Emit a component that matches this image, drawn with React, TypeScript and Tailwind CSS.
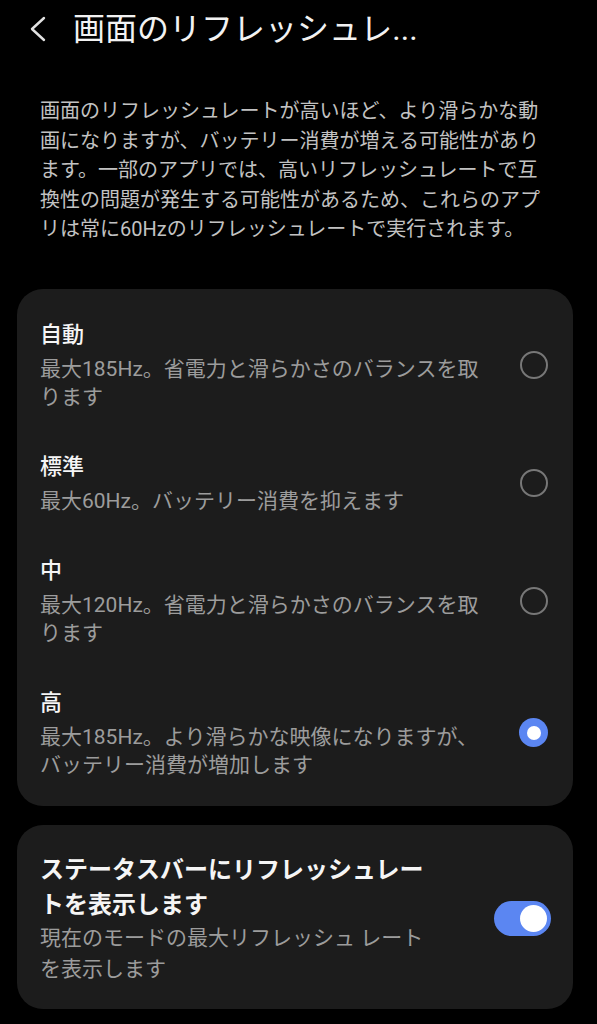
const options = [
  {
    name: '自動',
    lines: ['最大185Hz。省電力と滑らかさのバランスを取', 'ります'],
    selected: false,
  },
  {
    name: '標準',
    lines: ['最大60Hz。バッテリー消費を抑えます'],
    selected: false,
  },
  {
    name: '中',
    lines: ['最大120Hz。省電力と滑らかさのバランスを取', 'ります'],
    selected: false,
  },
  {
    name: '高',
    lines: ['最大185Hz。より滑らかな映像になりますが、', 'バッテリー消費が増加します'],
    selected: true,
  },
];

const description = [
  '画面のリフレッシュレートが高いほど、より滑らかな動',
  '画になりますが、バッテリー消費が増える可能性があり',
  'ます。一部のアプリでは、高いリフレッシュレートで互',
  '換性の問題が発生する可能性があるため、これらのアプ',
  'リは常に60Hzのリフレッシュレートで実行されます。',
];

function Radio({ checked }: { checked: boolean }) {
  if (checked) {
    return (
      <div className="flex h-[29px] w-[29px] flex-none items-center justify-center rounded-full bg-[#5b86f2]">
        <div className="h-[14px] w-[14px] rounded-full bg-white" />
      </div>
    );
  }
  return <div className="h-[28px] w-[28px] flex-none rounded-full border-2 border-[#777777]" />;
}

export default function App() {
  return (
    <div className="min-h-[1024px] bg-black font-['Roboto','Noto_Sans_CJK_JP',sans-serif] text-white">
      {/* Header */}
      <header className="flex h-[58px] items-center pl-[30px]">
        <svg width="16" height="26" viewBox="0 0 16 26" fill="none" className="flex-none">
          <polyline points="14,2 2,13 14,24" stroke="#e2e2e2" strokeWidth="2.4" strokeLinecap="round" strokeLinejoin="round" />
        </svg>
        <h1 className="ml-[27px] text-[32px] leading-[40px] text-[#f2f2f2]">画面のリフレッシュレ...</h1>
      </header>

      {/* Description */}
      <p className="mt-[39px] px-10 text-[20px] leading-[29.5px] text-[#c2c2c2]">
        {description.map((line) => (
          <span key={line} className="block whitespace-nowrap">
            {line}
          </span>
        ))}
      </p>

      {/* Options */}
      <div className="ml-[17px] mr-[24px] mt-[44px] rounded-[26px] bg-[#1c1c1c] pb-[7px] pt-[10px]">
        {options.map((opt) => (
          <div key={opt.name} className="flex items-center justify-between pl-[23px] pr-[25px] py-5">
            <div>
              <div className="text-[22px] font-medium leading-[32px] text-[#f5f5f5]">{opt.name}</div>
              <div className="mt-1 text-[21px] leading-[28px] text-[#9c9c9c]">
                {opt.lines.map((l) => (
                  <span key={l} className="block whitespace-nowrap">
                    {l}
                  </span>
                ))}
              </div>
            </div>
            <Radio checked={opt.selected} />
          </div>
        ))}
      </div>

      {/* Status bar toggle */}
      <div className="ml-[17px] mr-[24px] mt-[19px] flex items-center justify-between rounded-[26px] bg-[#1c1c1c] pb-6 pl-[23px] pr-[22px] pt-[28px]">
        <div>
          <div className="text-[24px] font-semibold leading-[35px] text-[#f5f5f5]">
            ステータスバーにリフレッシュレー
            <br />
            トを表示します
          </div>
          <div className="text-[21px] leading-[31px] text-[#9c9c9c]">
            現在のモードの最大リフレッシュ レート
            <br />
            を表示します
          </div>
        </div>
        <div className="flex h-[35px] w-[57px] flex-none items-center justify-end rounded-full bg-[#5b86f2] pr-[4px]">
          <div className="h-[27px] w-[27px] rounded-full bg-white" />
        </div>
      </div>
    </div>
  );
}
